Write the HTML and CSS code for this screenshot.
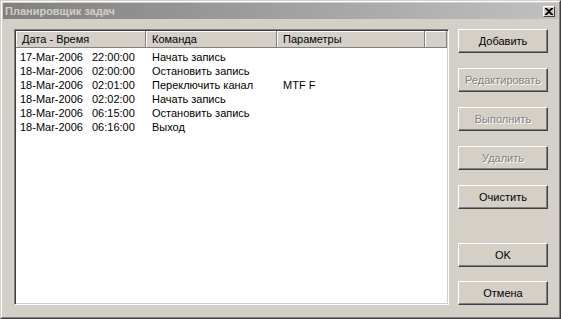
FILE: index.html
```html
<!DOCTYPE html>
<html lang="ru">
<head>
    <meta charset="UTF-8">
    <title>Планировщик задач</title>
    <link rel="stylesheet" href="styles.css">
</head>
<body>
    <div class="window">
        <div class="window-inner">
            <div class="titlebar">
                <span class="title">Планировщик задач</span>
                <button class="close-btn" type="button">
                    <svg width="8" height="7" viewBox="0 0 8 7">
                        <path d="M0 0h2l2 2 2-2h2v1l-3 2.5 3 2.5v1h-2l-2-2-2 2h-2v-1l3-2.5-3-2.5z" fill="#000"/>
                    </svg>
                </button>
            </div>
            <div class="content">
                <div class="listbox">
                    <div class="list-header">
                        <div class="col col-date">Дата - Время</div>
                        <div class="col col-cmd">Команда</div>
                        <div class="col col-par">Параметры</div>
                        <div class="col col-fill"></div>
                    </div>
                    <div class="list-rows">
                        <div class="row"><span class="date">17-Mar-2006</span><span class="time">22:00:00</span><span class="cmd">Начать запись</span><span class="par"></span></div>
                        <div class="row"><span class="date">18-Mar-2006</span><span class="time">02:00:00</span><span class="cmd">Остановить запись</span><span class="par"></span></div>
                        <div class="row"><span class="date">18-Mar-2006</span><span class="time">02:01:00</span><span class="cmd">Переключить канал</span><span class="par">MTF F</span></div>
                        <div class="row"><span class="date">18-Mar-2006</span><span class="time">02:02:00</span><span class="cmd">Начать запись</span><span class="par"></span></div>
                        <div class="row"><span class="date">18-Mar-2006</span><span class="time">06:15:00</span><span class="cmd">Остановить запись</span><span class="par"></span></div>
                        <div class="row"><span class="date">18-Mar-2006</span><span class="time">06:16:00</span><span class="cmd">Выход</span><span class="par"></span></div>
                    </div>
                </div>
                <div class="buttons">
                    <div class="btn-group">
                        <button class="btn" type="button">Добавить</button>
                        <button class="btn" type="button" disabled>Редактировать</button>
                        <button class="btn" type="button" disabled>Выполнить</button>
                        <button class="btn" type="button" disabled>Удалить</button>
                        <button class="btn" type="button">Очистить</button>
                    </div>
                    <div class="btn-group btn-group-bottom">
                        <button class="btn" type="button">OK</button>
                        <button class="btn" type="button">Отмена</button>
                    </div>
                </div>
            </div>
        </div>
    </div>
</body>
</html>
```

FILE: styles.css
```css
body {
    margin: 0;
    font-family: "Liberation Sans", Arial, sans-serif;
    font-size: 11px;
    color: #000;
    background-color: #d4d0c8;
}
.window {
    width: 561px;
    height: 319px;
    box-sizing: border-box;
    border: 1px solid;
    border-color: #d4d0c8 #404040 #404040 #d4d0c8;
    background-color: #d4d0c8;
}
.window-inner {
    height: 100%;
    box-sizing: border-box;
    border: 1px solid;
    border-color: #fff #808080 #808080 #fff;
    padding: 1px;
    display: flex;
    flex-direction: column;
}
.titlebar {
    height: 16px;
    display: flex;
    align-items: center;
    justify-content: space-between;
    padding: 0 2px 0 2px;
    background: linear-gradient(to right, #808080, #c0c0c0);
}
.title {
    color: #d4d0c8;
    font-weight: bold;
    font-size: 11px;
}
.close-btn {
    width: 12px;
    height: 11px;
    padding: 0;
    box-sizing: border-box;
    display: flex;
    align-items: center;
    justify-content: center;
    background-color: #d4d0c8;
    border: 1px solid;
    border-color: #fff #404040 #404040 #fff;
    margin-right: 1px;
}
.content {
    flex: 1;
    display: flex;
    padding: 10px 10px 11px 11px;
}
.listbox {
    width: 435px;
    box-sizing: border-box;
    border: 1px solid;
    border-color: #808080 #fff #fff #808080;
    box-shadow: inset 1px 1px 0 #404040, inset -1px -1px 0 #d4d0c8;
    padding: 1px;
    background-color: #fff;
}
.list-header {
    display: flex;
    height: 17px;
}
.col {
    box-sizing: border-box;
    height: 17px;
    line-height: 16px;
    padding-left: 6px;
    background-color: #d4d0c8;
    border-right: 1px solid #808080;
    border-bottom: 1px solid #808080;
    box-shadow: inset 1px 1px 0 #fff;
    white-space: nowrap;
}
.col-date {
    width: 130px;
}
.col-cmd {
    width: 131px;
}
.col-par {
    width: 148px;
}
.col-fill {
    flex: 1;
}
.list-rows {
    padding-top: 2px;
}
.row {
    display: flex;
    height: 14px;
    line-height: 14px;
    white-space: nowrap;
}
.date {
    width: 72px;
    padding-left: 4px;
}
.time {
    width: 54px;
}
.cmd {
    width: 131px;
    padding-left: 6px;
    box-sizing: border-box;
}
.par {
    padding-left: 6px;
}
.buttons {
    margin-left: 9px;
    width: 90px;
    display: flex;
    flex-direction: column;
    justify-content: space-between;
}
.btn-group {
    display: flex;
    flex-direction: column;
    gap: 15px;
}
.btn-group-bottom {
    gap: 14px;
}
.btn {
    height: 24px;
    width: 90px;
    padding: 0;
    font-family: "Liberation Sans", Arial, sans-serif;
    font-size: 11px;
    color: #000;
    background-color: #d4d0c8;
    border: 1px solid;
    border-color: #fff #404040 #404040 #fff;
    box-shadow: inset -1px -1px 0 #808080;
}
.btn:disabled {
    color: #808080;
    text-shadow: 1px 1px 0 #fff;
}
```
